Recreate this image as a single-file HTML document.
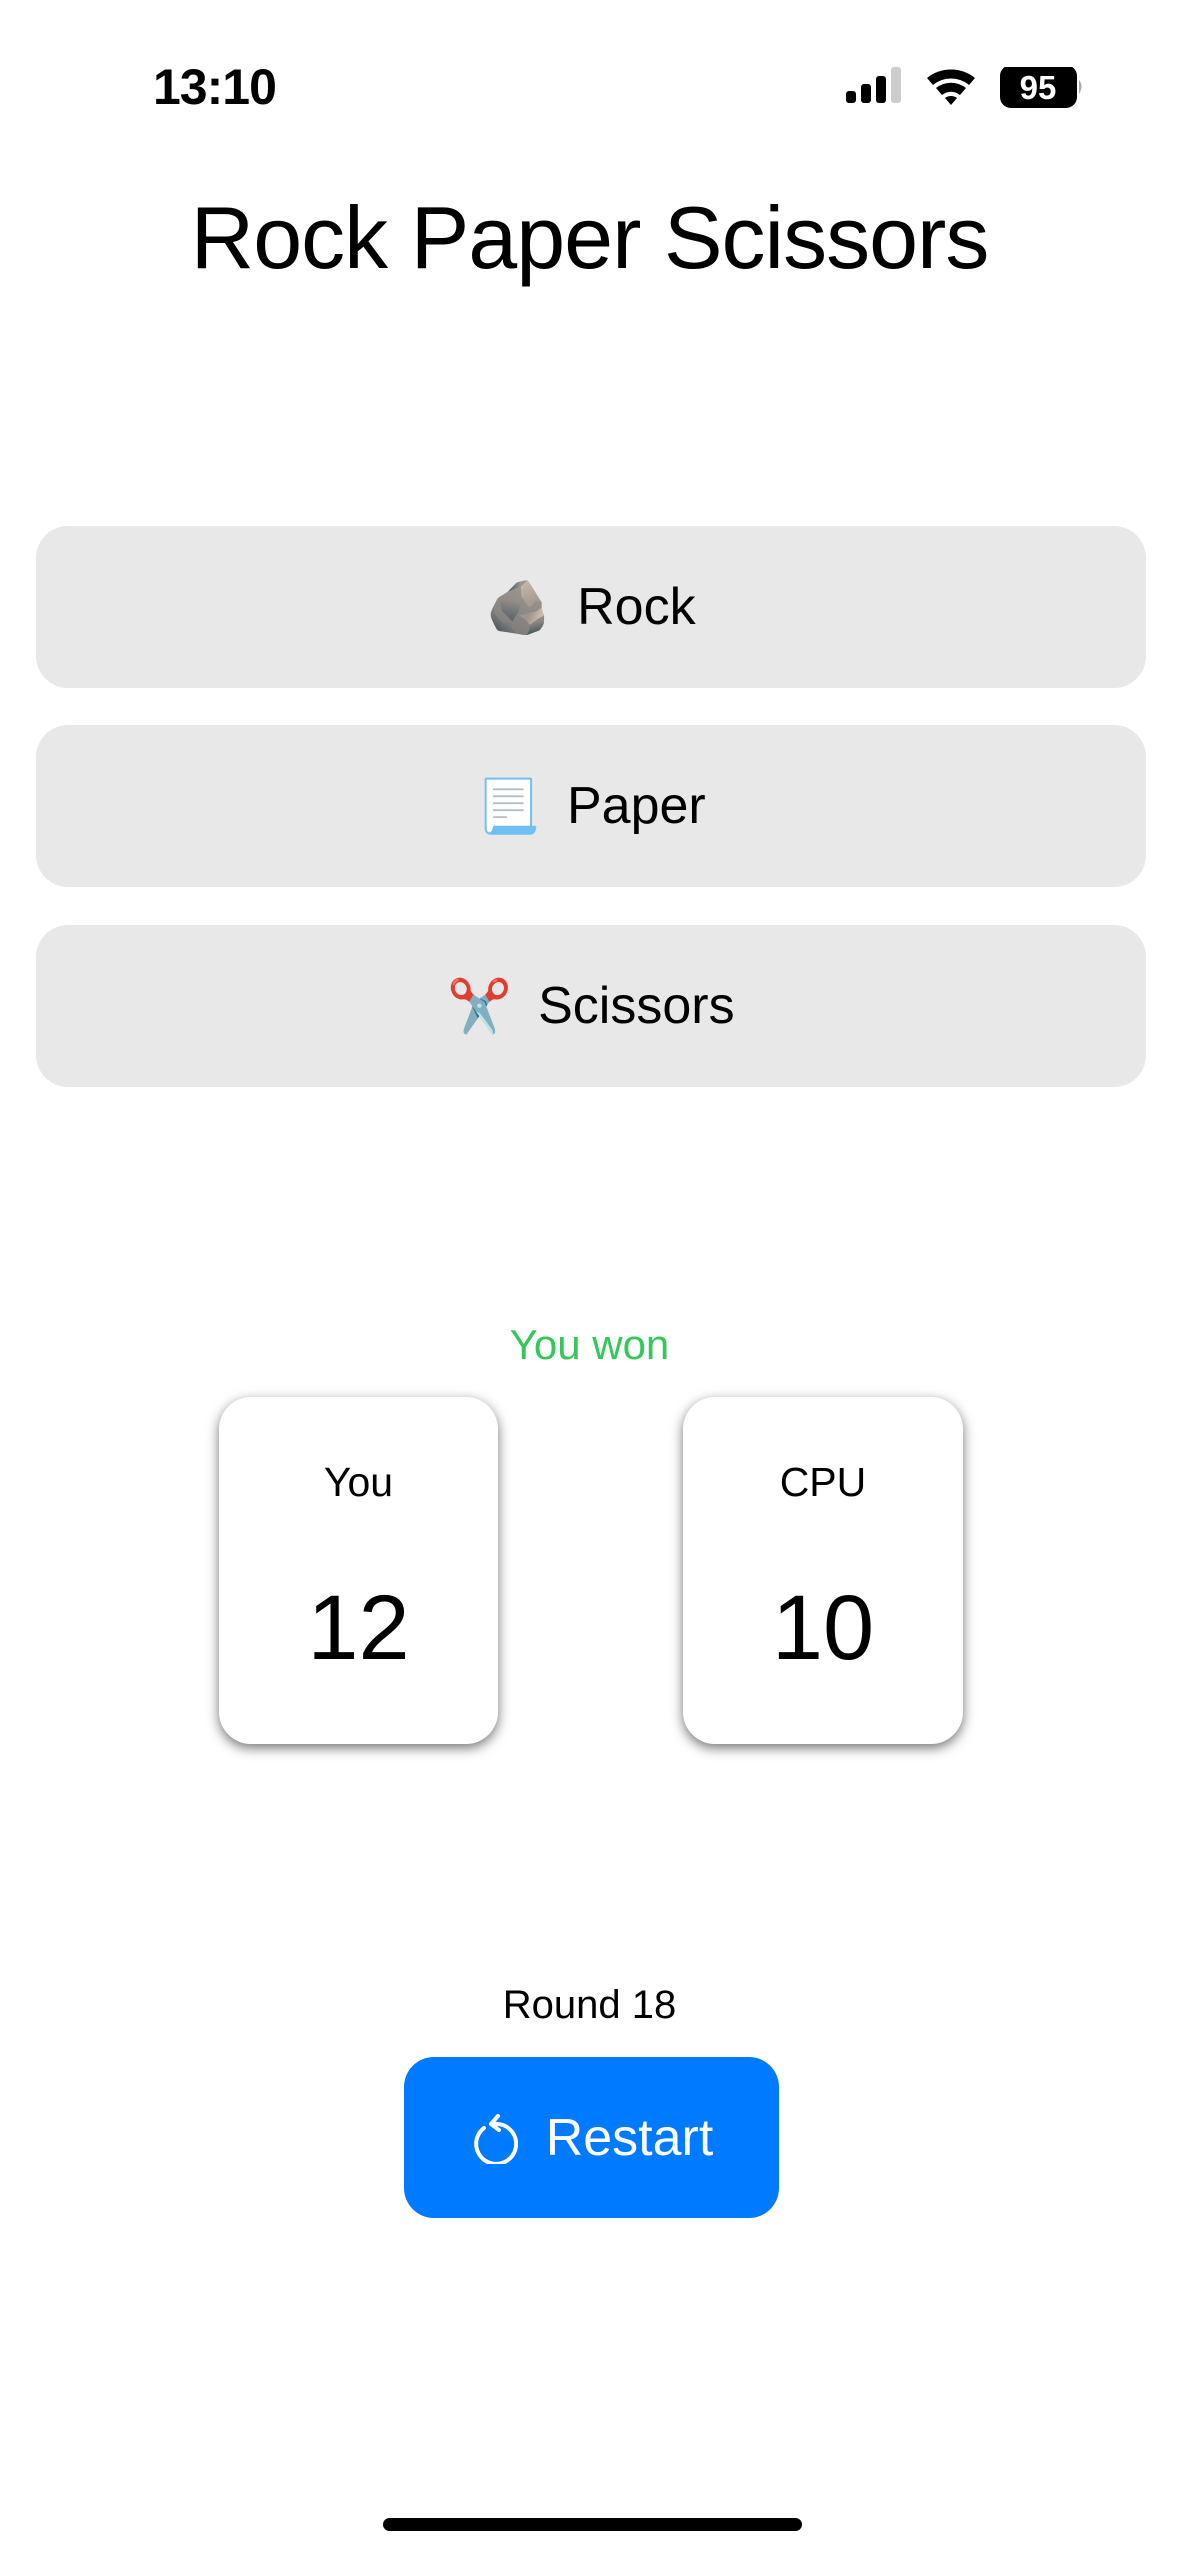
<!DOCTYPE html>
<html><head><meta charset="utf-8"><style>
*{margin:0;padding:0;box-sizing:border-box}
body{width:1179px;height:2556px;background:#fff;position:relative;overflow:hidden;font-family:"Liberation Sans",sans-serif;color:#000}
.abs{position:absolute}
.btn{position:absolute;left:36px;width:1110px;height:162px;background:#e8e8e8;border-radius:32px;display:flex;align-items:center;justify-content:center;font-size:52px}
.btn .e{font-size:52px;margin-right:26px}
.card{position:absolute;top:1397px;height:347px;background:#fff;border-radius:32px;box-shadow:0 4px 12px rgba(0,0,0,.55)}
.c{text-align:center}
</style></head><body>
<div class="abs" style="left:153px;top:58px;font-size:50px;font-weight:bold;letter-spacing:-1px">13:10</div>
<svg class="abs" style="left:846px;top:67px" width="240" height="45" viewBox="0 0 240 45">
<rect x="0" y="24" width="10" height="12" rx="3"/>
<rect x="15" y="17" width="10" height="19" rx="3"/>
<rect x="30" y="9" width="10" height="27" rx="3"/>
<rect x="45" y="0" width="10" height="36" rx="3" fill="#ccc"/>
<path d="M81 11 A38 38 0 0 1 129 11 L123 18 A28 28 0 0 0 87 18 Z"/>
<path d="M90 21 A24 24 0 0 1 120 21 L114 28 A14 14 0 0 0 96 28 Z"/>
<path d="M99 31 A10 10 0 0 1 111 31 L105 38 Z"/>
<rect x="154" y="-2" width="77" height="43" rx="11"/>
<path d="M233 13 q5 6 0 14 z" fill="#aaa"/>
<text x="192" y="32" text-anchor="middle" fill="#fff" font-size="33" font-weight="bold" font-family="Liberation Sans">95</text>
</svg>
<div class="abs c" style="left:0;width:1179px;top:187px;font-size:88px;letter-spacing:-1px">Rock Paper Scissors</div>
<div class="btn" style="top:526px"><span class="e">🪨</span>Rock</div>
<div class="btn" style="top:725px"><span class="e">📃</span>Paper</div>
<div class="btn" style="top:925px"><span class="e">✂️</span>Scissors</div>
<div class="abs c" style="left:0;width:1179px;top:1321px;font-size:42px;color:#34c759">You won</div>
<div class="card" style="left:219px;width:279px"></div>
<div class="card" style="left:683px;width:280px"></div>
<div class="abs c" style="left:219px;width:279px;top:1459px;font-size:41px">You</div>
<div class="abs c" style="left:683px;width:280px;top:1459px;font-size:41px">CPU</div>
<div class="abs c" style="left:219px;width:279px;top:1576px;font-size:92px">12</div>
<div class="abs c" style="left:683px;width:280px;top:1576px;font-size:92px">10</div>
<div class="abs c" style="left:0;width:1179px;top:1983px;font-size:40px">Round 18</div>
<div class="abs" style="left:404px;top:2057px;width:375px;height:161px;background:#007aff;border-radius:30px;display:flex;align-items:center;justify-content:center;color:#fff;font-size:52px">
<svg width="48" height="52" viewBox="0 0 48 52" style="margin-right:28px"><path d="M14 16 A20 20 0 1 0 24 12" fill="none" stroke="#fff" stroke-width="4" stroke-linecap="round"/><path d="M28 4 L21 12 L29 18" fill="none" stroke="#fff" stroke-width="4" stroke-linecap="round" stroke-linejoin="round"/></svg>Restart</div>
<div class="abs" style="left:383px;top:2518px;width:419px;height:13px;border-radius:7px;background:#000"></div>
</body></html>
